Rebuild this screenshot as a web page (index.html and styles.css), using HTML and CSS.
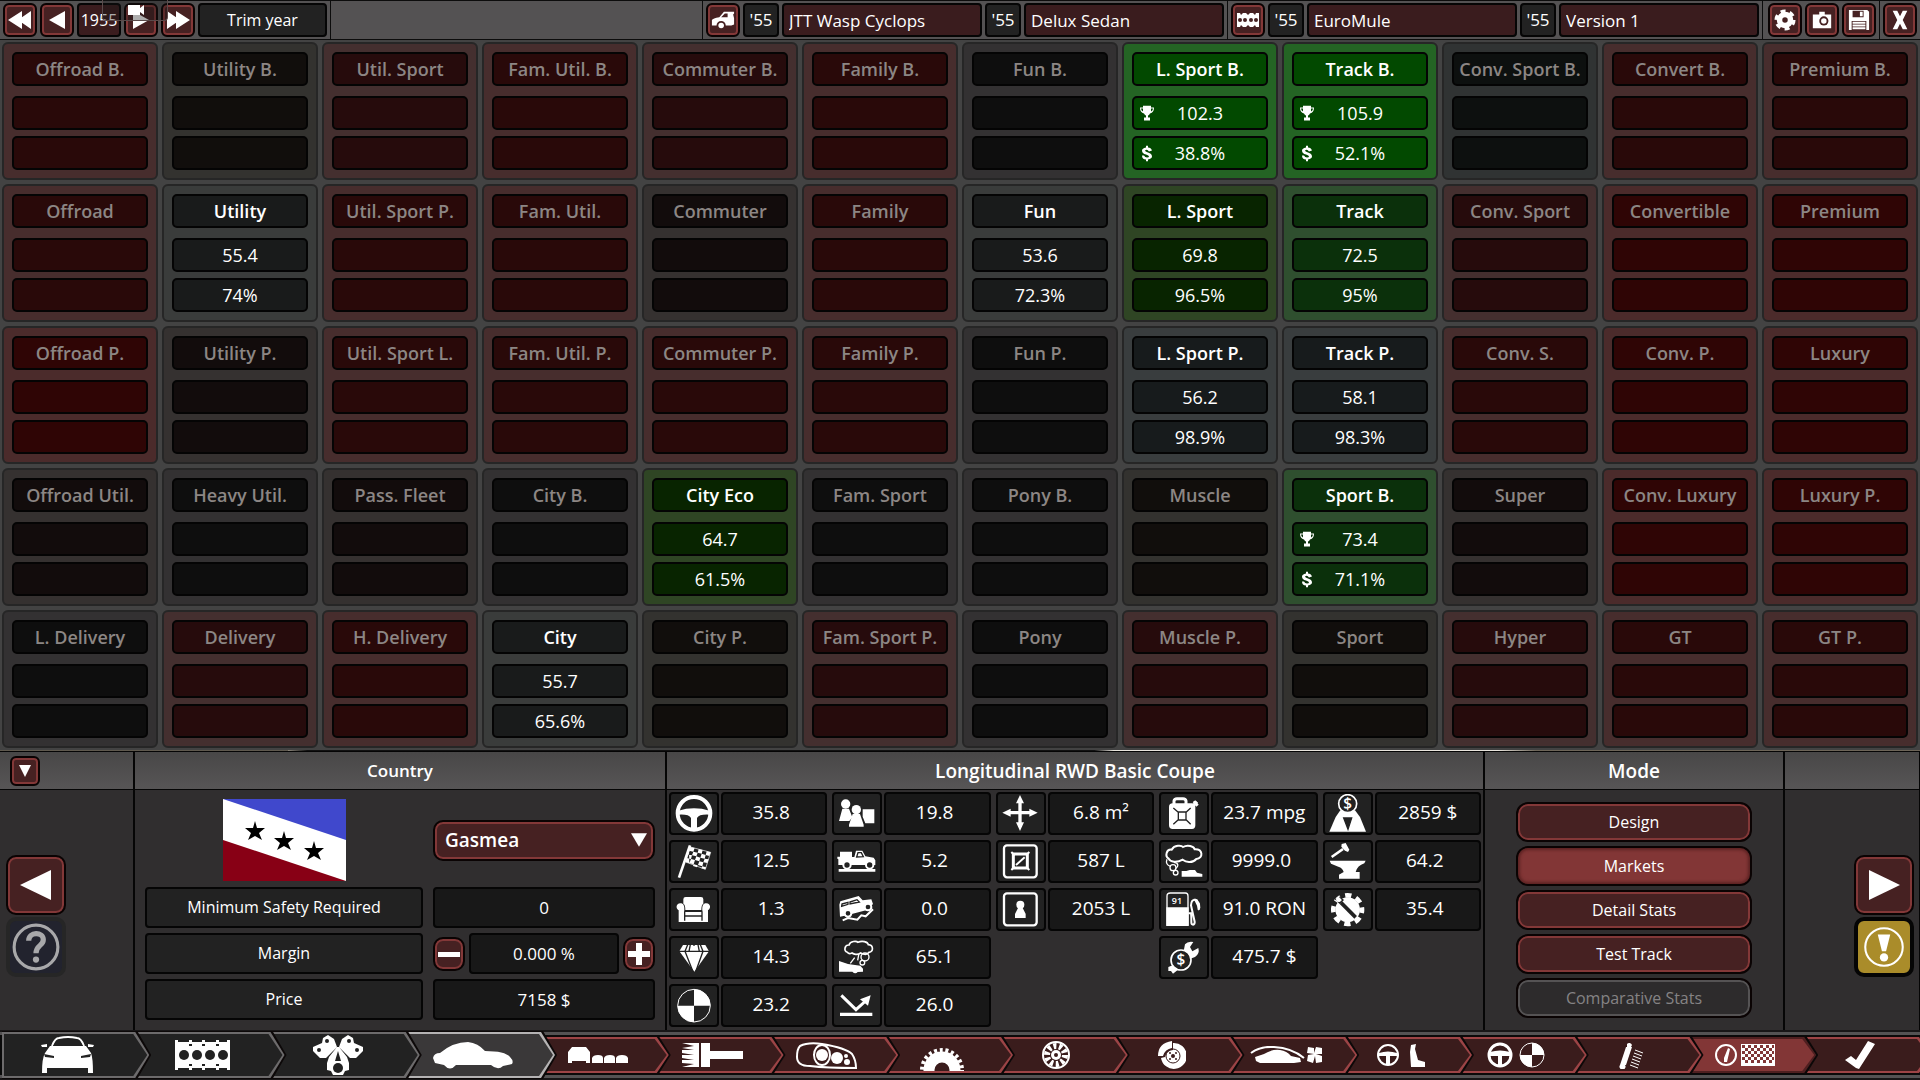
FILE: index.html
```html
<!DOCTYPE html>
<html lang="en">
<head>
  <meta charset="UTF-8">
  <meta name="viewport" content="width=device-width, initial-scale=1.0">
  <title>Markets - JTT Wasp Cyclops</title>
  <link rel="stylesheet" href="styles.css">
</head>
<body>
  <!-- Top bar -->
  <header class="topbar">
    <div class="group">
      <button class="btn square" aria-label="Back ten years"><svg viewBox="0 0 24 20"><path d="M0 10L14 1V19ZM10 10L23 1V19Z"/></svg></button>
      <button class="btn square" aria-label="Previous year"><svg viewBox="0 0 24 20"><path d="M4 10L20 1V19Z"/></svg></button>
      <span class="year">1955</span>
      <button class="btn square" aria-label="Next year"><svg viewBox="0 0 24 20"><path d="M20 10L4 1V19Z"/></svg></button>
      <button class="btn square" aria-label="Forward ten years"><svg viewBox="0 0 24 20"><path d="M24 10L10 1V19ZM14 10L1 1V19Z"/></svg></button>
      <span class="tag wide">Trim year</span>
    </div>
    <div class="camera-tab"><svg viewBox="0 0 16 12"><path d="M0 1H12V4L16 1V11L12 8V11H0Z"/></svg></div>
    <div class="spacer"></div>
    <div class="group">
      <button class="btn square" aria-label="Car model"><svg viewBox="0 0 26 20"><path d="M1 16V10Q2 8 9 7L14 1H25V3L24 4L25 8V15L22 16H16A5 5 0 0 0 6 16ZM11 7H18V3H15Z" fill-rule="evenodd"/><circle cx="11" cy="16" r="3"/></svg></button>
      <span class="tag">'55</span>
      <input class="name" aria-label="Model name" value="JTT Wasp Cyclops">
      <span class="tag">'55</span>
      <input class="name" aria-label="Trim name" value="Delux Sedan">
    </div>
    <div class="group">
      <button class="btn square" aria-label="Engine"><svg viewBox="0 0 24 16"><path d="M1 1H4L5 3L7 1H10L12 3L14 1H17L19 3L20 1H23V15H20L19 13L17 15H14L12 13L10 15H7L5 13L4 15H1Z"/><g class="hole"><circle cx="4" cy="8" r="2"/><circle cx="9" cy="8" r="2"/><circle cx="15" cy="8" r="2"/><circle cx="20" cy="8" r="2"/></g></svg></button>
      <span class="tag">'55</span>
      <input class="name long" aria-label="Engine name" value="EuroMule">
      <span class="tag">'55</span>
      <input class="name" aria-label="Engine version" value="Version 1">
    </div>
    <div class="group tools">
      <button class="btn square" aria-label="Settings"><svg viewBox="0 0 24 24"><circle cx="12" cy="12" r="6" fill="none" stroke="#fff" stroke-width="6"/><circle cx="12" cy="12" r="9" fill="none" stroke="#fff" stroke-width="5" stroke-dasharray="5 4.42"/></svg></button>
      <button class="btn square" aria-label="Screenshot"><svg viewBox="0 0 24 24"><path d="M2 6H9V3H15V6H22V21H2Z"/><circle class="hole" cx="14" cy="13" r="5"/><circle cx="14" cy="13" r="3"/></svg></button>
      <button class="btn square" aria-label="Save"><svg viewBox="0 0 24 24"><path d="M1 1H21L23 3V23H1Z"/><path class="hole" d="M5 2H17V9H5ZM4 13H20V23H4Z"/><path d="M13 3H16V8H13ZM5 14H19V16H5ZM5 17H19V19H5ZM5 20H19V22H5Z"/></svg></button>
    </div>
    <div class="group">
      <button class="btn square" aria-label="Close"><svg viewBox="0 0 24 24"><path d="M4 2H9L12 8L15 2H20L15 12L20 22H15L12 16L9 22H4L9 12Z"/></svg></button>
    </div>
  </header>

  <!-- Market demographics -->
  <main class="board">
    <article class="cell red"><h3>Offroad B.</h3><p></p><p></p></article>
    <article class="cell olive"><h3>Utility B.</h3><p></p><p></p></article>
    <article class="cell soft"><h3>Util. Sport</h3><p></p><p></p></article>
    <article class="cell red"><h3>Fam. Util. B.</h3><p></p><p></p></article>
    <article class="cell soft"><h3>Commuter B.</h3><p></p><p></p></article>
    <article class="cell red"><h3>Family B.</h3><p></p><p></p></article>
    <article class="cell dark"><h3>Fun B.</h3><p></p><p></p></article>
    <article class="cell best lit"><h3>L. Sport B.</h3><p class="rank"><svg viewBox="0 0 14 16"><use href="#cup"/></svg>102.3</p><p class="rank"><svg viewBox="0 0 14 16"><use href="#cash"/></svg>38.8%</p></article>
    <article class="cell best lit"><h3>Track B.</h3><p class="rank"><svg viewBox="0 0 14 16"><use href="#cup"/></svg>105.9</p><p class="rank"><svg viewBox="0 0 14 16"><use href="#cash"/></svg>52.1%</p></article>
    <article class="cell slate"><h3>Conv. Sport B.</h3><p></p><p></p></article>
    <article class="cell red"><h3>Convert B.</h3><p></p><p></p></article>
    <article class="cell red"><h3>Premium B.</h3><p></p><p></p></article>

    <article class="cell red"><h3>Offroad</h3><p></p><p></p></article>
    <article class="cell grey lit"><h3>Utility</h3><p>55.4</p><p>74%</p></article>
    <article class="cell red"><h3>Util. Sport P.</h3><p></p><p></p></article>
    <article class="cell red"><h3>Fam. Util.</h3><p></p><p></p></article>
    <article class="cell warm"><h3>Commuter</h3><p></p><p></p></article>
    <article class="cell red"><h3>Family</h3><p></p><p></p></article>
    <article class="cell grey lit"><h3>Fun</h3><p>53.6</p><p>72.3%</p></article>
    <article class="cell moss lit"><h3>L. Sport</h3><p>69.8</p><p>96.5%</p></article>
    <article class="cell green lit"><h3>Track</h3><p>72.5</p><p>95%</p></article>
    <article class="cell soft"><h3>Conv. Sport</h3><p></p><p></p></article>
    <article class="cell deep"><h3>Convertible</h3><p></p><p></p></article>
    <article class="cell deep"><h3>Premium</h3><p></p><p></p></article>

    <article class="cell deep"><h3>Offroad P.</h3><p></p><p></p></article>
    <article class="cell warm"><h3>Utility P.</h3><p></p><p></p></article>
    <article class="cell red"><h3>Util. Sport L.</h3><p></p><p></p></article>
    <article class="cell red"><h3>Fam. Util. P.</h3><p></p><p></p></article>
    <article class="cell red"><h3>Commuter P.</h3><p></p><p></p></article>
    <article class="cell red"><h3>Family P.</h3><p></p><p></p></article>
    <article class="cell dark"><h3>Fun P.</h3><p></p><p></p></article>
    <article class="cell steel lit"><h3>L. Sport P.</h3><p>56.2</p><p>98.9%</p></article>
    <article class="cell steel lit"><h3>Track P.</h3><p>58.1</p><p>98.3%</p></article>
    <article class="cell red"><h3>Conv. S.</h3><p></p><p></p></article>
    <article class="cell deep"><h3>Conv. P.</h3><p></p><p></p></article>
    <article class="cell deep"><h3>Luxury</h3><p></p><p></p></article>

    <article class="cell warm"><h3>Offroad Util.</h3><p></p><p></p></article>
    <article class="cell dark"><h3>Heavy Util.</h3><p></p><p></p></article>
    <article class="cell warm"><h3>Pass. Fleet</h3><p></p><p></p></article>
    <article class="cell dark"><h3>City B.</h3><p></p><p></p></article>
    <article class="cell moss lit"><h3>City Eco</h3><p>64.7</p><p>61.5%</p></article>
    <article class="cell dark"><h3>Fam. Sport</h3><p></p><p></p></article>
    <article class="cell dark"><h3>Pony B.</h3><p></p><p></p></article>
    <article class="cell olive"><h3>Muscle</h3><p></p><p></p></article>
    <article class="cell green lit"><h3>Sport B.</h3><p class="rank"><svg viewBox="0 0 14 16"><use href="#cup"/></svg>73.4</p><p class="rank"><svg viewBox="0 0 14 16"><use href="#cash"/></svg>71.1%</p></article>
    <article class="cell warm"><h3>Super</h3><p></p><p></p></article>
    <article class="cell deep"><h3>Conv. Luxury</h3><p></p><p></p></article>
    <article class="cell deep"><h3>Luxury P.</h3><p></p><p></p></article>

    <article class="cell dark"><h3>L. Delivery</h3><p></p><p></p></article>
    <article class="cell soft"><h3>Delivery</h3><p></p><p></p></article>
    <article class="cell red"><h3>H. Delivery</h3><p></p><p></p></article>
    <article class="cell grey lit"><h3>City</h3><p>55.7</p><p>65.6%</p></article>
    <article class="cell olive"><h3>City P.</h3><p></p><p></p></article>
    <article class="cell soft"><h3>Fam. Sport P.</h3><p></p><p></p></article>
    <article class="cell dark"><h3>Pony</h3><p></p><p></p></article>
    <article class="cell soft"><h3>Muscle P.</h3><p></p><p></p></article>
    <article class="cell olive"><h3>Sport</h3><p></p><p></p></article>
    <article class="cell soft"><h3>Hyper</h3><p></p><p></p></article>
    <article class="cell red"><h3>GT</h3><p></p><p></p></article>
    <article class="cell red"><h3>GT P.</h3><p></p><p></p></article>
  </main>
  <div class="scene-edge"></div>

  <!-- Bottom panel -->
  <section class="panel">
    <div class="col">
      <div class="col-head left"><button class="btn fold" aria-label="Collapse panel"><svg viewBox="0 0 12 12"><path d="M0 0H12L6 12Z"/></svg></button></div>
      <div class="side">
        <button class="btn nav" aria-label="Previous"><svg viewBox="0 0 32 32"><path d="M0 16L31 1V31Z"/></svg></button>
        <button class="btn help" aria-label="Help"><svg viewBox="0 0 48 48"><circle cx="24" cy="24" r="21"/><path d="M17 18C17 9 31 9 31 17C31 23 24 22 24 30"/><circle class="dot" cx="24" cy="36" r="3"/></svg></button>
      </div>
    </div>

    <div class="col">
      <h2 class="col-head small-title">Country</h2>
      <div class="country">
        <svg class="flag" viewBox="0 0 123 82"><path fill="#fff" d="M0 0H123V82H0Z"/><path fill="#4048cc" d="M0 0H123V41Z"/><path fill="#880015" d="M0 41L123 82H0Z"/>
          <g fill="#000"><path id="star" d="M32 22L34 29H42L36 34L39 41L32 37L25 41L28 34L22 29H30Z"/><use href="#star" x="29" y="10"/><use href="#star" x="59" y="20"/></g></svg>
        <div class="picker">
          <select aria-label="Country"><option>Gasmea</option></select>
          <svg viewBox="0 0 14 12"><path d="M0 0H14L7 12Z"/></svg>
        </div>
        <span class="key">Minimum Safety Required</span>
        <span class="val">0</span>
        <label class="key" for="margin">Margin</label>
        <div class="stepper">
          <button class="btn step" aria-label="Decrease margin"><svg viewBox="0 0 24 24"><path d="M1 10H23V15H1Z"/></svg></button>
          <input class="val" id="margin" value="0.000 %">
          <button class="btn step" aria-label="Increase margin"><svg viewBox="0 0 24 24"><path d="M1 9H9V1H15V9H23V15H15V23H9V15H1Z"/></svg></button>
        </div>
        <span class="key">Price</span>
        <span class="val">7158 $</span>
      </div>
    </div>

    <div class="col">
      <h2 class="col-head">Longitudinal RWD Basic Coupe</h2>
      <div class="stats">
        <div class="stat"><svg viewBox="6 6 138 117" class="icon"><circle cx="75" cy="64" r="49" class="ln" stroke-width="12"/><path d="M28 56Q75 42 122 56V68Q90 66 84 78V111H66V78Q60 66 28 68Z"/></svg><span class="val plain">35.8</span></div>
        <div class="stat"><svg viewBox="6 6 138 117" class="icon"><path class="ln" stroke-width="8" d="M63 16L30 113"/><path class="ln" stroke-width="2" d="M64 21L125 37L109 88L50 66Z"/><path d="M64 21L77 24L73 35L60 32ZM89 27L101 30L98 41L86 38ZM113 34L125 37L121 48L110 45ZM73 35L86 38L82 49L69 46ZM98 41L110 45L107 56L94 53ZM60 32L57 43L69 46L66 57L53 54L49 66L61 70L66 57L78 60L82 49L94 53L91 64L103 67L107 56L119 58L115 69L103 67L100 79L111 82L109 88L97 85L100 79L87 75L91 64L78 60L74 73L86 76L84 82L72 78L74 73L61 70Z"/></svg><span class="val plain">12.5</span></div>
        <div class="stat"><svg viewBox="6 6 138 117" class="icon"><path d="M43 34Q43 27 50 27H96Q103 27 103 34V47Q97 50 97 66H49Q49 50 43 47ZM34 46C44 46 47 54 46 69H100C99 54 102 46 112 46C126 47 126 62 117 67V102H29V67C20 62 20 47 34 46Z"/><path class="cut" d="M46 70H100M46 84H100M47 70V98M99 70V98"/></svg><span class="val plain">1.3</span></div>
        <div class="stat"><svg viewBox="6 6 138 117" class="icon"><path d="M42 27H109L120 46L76 107L31 46Z"/><path class="cut" d="M28 46H122M56 26L48 46L72 107M94 26L102 46L80 107M75 26V30M64 26L60 46M87 26L91 46"/></svg><span class="val plain">14.3</span></div>
        <div class="stat"><svg viewBox="6 6 138 117" class="icon"><circle cx="75" cy="65" r="49" class="ln" stroke-width="3"/><path d="M75 65V16A49 49 0 0 1 124 65ZM75 65V114A49 49 0 0 1 26 65Z"/></svg><span class="val plain">23.2</span></div>

        <div class="stat"><svg viewBox="6 6 138 117" class="icon"><circle cx="41" cy="36" r="14"/><path d="M31 50H51L61 76L52 87H21ZM92 52H127V94H100L92 74Z"/><circle cx="73" cy="53" r="14"/><path d="M62 66H84L95 98V104H51V98Z"/></svg><span class="val plain">19.8</span></div>
        <div class="stat"><svg viewBox="6 6 138 117" class="icon"><path d="M24 35H60V51H67L72 32H91L100 49L125 53L130 61V75H19V58L16 56V50H24Z"/><path class="cut" d="M74 51L78 38H88L94 50Z"/><g class="tyre"><circle cx="45" cy="75" r="11"/><circle cx="113" cy="75" r="11"/></g><path d="M20 87H130V95H20Z"/></svg><span class="val plain">5.2</span></div>
        <div class="stat"><svg viewBox="6 6 138 117" class="icon"><path d="M22 50L25 40L80 24L92 37L118 34L123 48L105 66L45 82L24 86Z"/><path class="cut" d="M30 48L48 43V49L29 55ZM54 42L75 35L82 42L54 48Z"/><g class="tyre"><circle cx="48" cy="76" r="10"/><circle cx="108" cy="57" r="10"/></g><path class="ln" stroke-width="6" d="M32 97L48 90L76 95L88 82L101 85L123 64"/></svg><span class="val plain">0.0</span></div>
        <div class="stat"><svg viewBox="6 6 138 117" class="icon"><path class="ln" stroke-width="5" d="M46 49C34 45 38 26 51 27C55 14 74 15 78 19C90 13 107 17 109 26C125 27 125 47 111 49C105 58 92 54 86 51C77 58 65 55 60 51C54 54 49 53 46 49Z"/><g class="ln" stroke-width="4"><circle cx="99" cy="63" r="12"/><circle cx="91" cy="80" r="7"/><path d="M68 65L55 82M80 57L77 73"/></g><path d="M21 75L48 84L85 89L93 98V107L77 108Q70 116 61 107H21Z"/></svg><span class="val plain">65.1</span></div>
        <div class="stat"><svg viewBox="6 6 138 117" class="icon"><path class="ln" stroke-width="9" d="M28 34L72 77L104 48"/><path d="M116 34L108 65L84 46ZM24 86H121V96H24Z"/></svg><span class="val plain">26.0</span></div>

        <div class="stat"><svg viewBox="6 6 138 117" class="icon"><path d="M72 9L84 34H77V57H100V50L125 62L100 74V67H77V91H84L72 117L60 91H67V67H44V74L19 62L44 50V57H67V34H60Z"/></svg><span class="val">6.8 m²</span></div>
        <div class="stat"><svg viewBox="6 6 138 117" class="icon"><rect class="ln" stroke-width="7" x="24" y="16" width="98" height="96" rx="9"/><path class="ln" stroke-width="9" d="M52 42H94V84H52Z"/><path class="ln" stroke-width="6" d="M46 36L56 46M100 36L90 46M46 90L56 80M100 90L90 80M60 75L86 52"/></svg><span class="val">587 L</span></div>
        <div class="stat"><svg viewBox="6 6 138 117" class="icon"><rect class="ln" stroke-width="7" x="24" y="16" width="98" height="96" rx="9"/><circle cx="73" cy="50" r="12"/><path d="M66 60H80L89 78V90H57V78Z"/></svg><span class="val">2053 L</span></div>
        <div class="gap"></div>
        <div class="gap"></div>

        <div class="stat"><svg viewBox="6 6 138 117" class="icon"><path class="ln" stroke-width="9" d="M45 37V27Q46 20 54 20H72Q80 20 81 27V37M96 48L114 29"/><path d="M30 45Q30 34 41 34H99Q109 34 109 45V100Q109 111 99 111H41Q30 111 30 100ZM101 30L109 25L119 38L112 44Z"/><path class="cut" d="M43 48L57 60M95 48L82 60M43 97L57 84M95 97L82 84M58 60H81V84H58Z" fill="none"/></svg><span class="val">23.7 mpg</span></div>
        <div class="stat"><svg viewBox="6 6 138 117" class="icon"><path class="ln" stroke-width="6" d="M29 56C17 48 22 27 38 29C46 14 68 16 72 21C85 13 105 18 107 28C132 27 134 54 112 57C99 72 80 66 71 59C53 69 34 66 29 56Z"/><g class="ln" stroke-width="4"><path d="M24 58C20 68 24 76 35 79M45 67C61 69 58 81 50 85"/><circle cx="42" cy="83" r="9"/><circle cx="50" cy="98" r="7"/></g><path d="M68 93H82L92 90H108L114 98L130 102V110H68Z"/></svg><span class="val plain">9999.0</span></div>
        <div class="stat"><svg viewBox="6 6 138 117" class="icon"><path class="ln" stroke-width="4" d="M24 113V24Q24 15 34 15H79Q87 15 87 24V113"/><path d="M22 58H89V114H22Z"/><path class="ln" stroke-width="6" d="M88 76H96Q97 80 97 103Q97 110 102 110Q108 109 107 101L96 52Q97 34 109 35L119 46V66"/><path d="M104 32L115 34L123 48L124 60L118 68L114 53Z"/><text x="54" y="49">91</text></svg><span class="val">91.0 RON</span></div>
        <div class="stat"><svg viewBox="6 6 138 117" class="icon"><path d="M74 45L78 25Q86 15 103 18L93 33L100 46L118 36Q123 53 108 63L94 68ZM28 93L43 87L56 102L42 113L36 105H28Z"/><circle class="disc" cx="66" cy="72" r="30"/><text class="coin" x="66" y="88">$</text></svg><span class="val">475.7 $</span></div>
        <div class="gap"></div>

        <div class="stat"><svg viewBox="6 6 138 117" class="icon"><path d="M52 55H96L111 75L129 119H19L38 75Z"/><path class="cut solid" d="M62 78H86L75 112Z"/><circle class="disc" cx="74" cy="35" r="27"/><text class="coin" x="74" y="51">$</text></svg><span class="val">2859 $</span></div>
        <div class="stat"><svg viewBox="6 6 138 117" class="icon"><path class="ln" stroke-width="8" d="M26 51L60 27"/><path d="M56 12L68 9L79 29L75 36L66 32L55 20ZM20 62H128L124 70Q103 77 98 96H110V116H48V104L62 96Q59 84 46 80L24 71Z"/></svg><span class="val plain">64.2</span></div>
        <div class="stat"><svg viewBox="6 6 138 117" class="icon"><circle cx="74" cy="65" r="37"/><circle cx="74" cy="65" r="43" class="ln" stroke-width="14" stroke-dasharray="19 14.77" stroke-dashoffset="9"/><path class="cut bar" d="M54 44L98 88"/><path class="cut" d="M37 32L50 45L60 36L49 27"/><circle cx="46" cy="35" r="7"/></svg><span class="val plain">35.4</span></div>
      </div>
    </div>

    <div class="col">
      <h2 class="col-head">Mode</h2>
      <div class="modes">
        <button class="btn mode">Design</button>
        <button class="btn mode active">Markets</button>
        <button class="btn mode">Detail Stats</button>
        <button class="btn mode">Test Track</button>
        <button class="btn mode" disabled>Comparative Stats</button>
      </div>
    </div>

    <div class="col last">
      <div class="col-head"></div>
      <div class="side right">
        <button class="btn nav" aria-label="Next"><svg viewBox="0 0 32 32"><path d="M32 16L1 1V31Z"/></svg></button>
        <button class="btn alert" aria-label="Warnings"><svg viewBox="0 0 48 48"><circle cx="24" cy="24" r="18"/><path d="M18 12H30L26 28H22Z"/><path d="M24 30A4 4 0 1 1 24 38A4 4 0 1 1 24 30Z"/></svg></button>
      </div>
    </div>
  </section>

  <!-- Design steps -->
  <nav class="track">
    <div class="stages">
      <button class="stage" aria-label="Car body"><svg width="53" height="38" viewBox="0 0 53 38"><path class="ln" stroke-width="2" d="M11 10Q14 2 18 2Q27 0 36 2Q40 2 43 10"/><path d="M9 10H45L50 17Q52 22 52 37H47V32H6V37H1Q1 22 4 17ZM0 9L6 8V11H1ZM53 9L47 8V11H52Z"/><path fill="#222" d="M12 10L16 4Q27 2 38 4L42 10ZM3 18L13 20V22L4 21ZM50 18L40 20V22L49 21Z"/></svg></button>
      <button class="stage" aria-label="Engine block"><svg width="55" height="30" viewBox="0 0 55 30"><path d="M0 0H3V2H14V0H17V2H27V0H30V2H41V0H44V2H52V0H55V30H52V28H44V30H41V28H30V30H27V28H17V30H14V28H3V30H0Z"/><g fill="#222"><circle cx="9" cy="15" r="5"/><circle cx="22" cy="15" r="5"/><circle cx="35" cy="15" r="5"/><circle cx="48" cy="15" r="5"/><path d="M14 4H17V6H14ZM27 4H30V6H27ZM41 4H44V6H41ZM14 24H17V26H14ZM27 24H30V26H27ZM41 24H44V26H41Z"/></g></svg></button>
      <button class="stage" aria-label="Engine internals"><svg width="50" height="40" viewBox="0 0 50 40"><path d="M15 0L21 4L24 12L13 23H7L0 16V12L9 8L10 3ZM35 0L29 4L26 12L37 23H43L50 16V12L41 8L40 3ZM24 12H26L34 22L36 28V35L32 36L30 40H20L18 36L14 35V28L16 22Z"/><g fill="#222"><circle cx="14" cy="6" r="2"/><circle cx="36" cy="6" r="2"/><circle cx="6" cy="15" r="2"/><circle cx="44" cy="15" r="2"/><path d="M25 16L28 26H22Z"/><circle cx="25" cy="33" r="5"/></g></svg></button>
      <button class="stage current" aria-label="Trim"><svg width="80" height="27" viewBox="0 0 80 27"><path d="M0 16Q1 11 7 11Q20 0 35 0Q45 1 52 9Q72 9 77 15Q81 19 79 22L70 24Q65 29 58 23H23Q17 30 11 23L2 21Z"/></svg></button>
    </div>
    <div class="steps">
      <button class="stage small" aria-label="Body type"><svg width="60" height="17" viewBox="0 0 60 17"><path d="M0 5L4 0H18L22 5V16H18V14H4V16H0ZM24 16V11Q25 8 30 8Q35 8 35 11V16ZM36 16V11Q37 8 42 8Q47 8 47 11V16ZM48 16V11Q49 8 54 8Q59 8 60 11V16Z"/></svg></button>
      <button class="stage small" aria-label="Paint"><svg width="61" height="24" viewBox="0 0 61 24"><path d="M0 0H17V24H0L12 21L0 20V17L12 17L0 15V12L12 12L0 10V7L12 7L0 5L12 3ZM19 0H28V8H61V16H28V24H19Z"/></svg></button>
      <button class="stage small" aria-label="Fixtures"><svg width="62" height="27" viewBox="0 0 62 27"><path class="ln" stroke-width="2" d="M4 4Q12 0 26 2Q50 6 56 12Q60 18 60 26Q30 26 14 24Q1 24 1 15Q1 7 4 4Z"/><ellipse class="ln" stroke-width="2" cx="26" cy="13" rx="8" ry="10"/><circle cx="26" cy="13" r="6"/><circle cx="41" cy="16" r="6"/><circle cx="50" cy="14" r="2"/><circle cx="51" cy="20" r="3"/></svg></button>
      <button class="stage small low" aria-label="Gearbox"><svg width="44" height="23" viewBox="0 0 44 23"><circle cx="22" cy="22" r="13" class="ln" stroke-width="11"/><circle cx="22" cy="22" r="20" class="ln" stroke-width="4" stroke-dasharray="3 2.71"/></svg></button>
      <button class="stage small" aria-label="Wheels"><svg width="29" height="29" viewBox="0 0 29 29"><circle cx="14" cy="14" r="13" class="ln" stroke-width="2"/><circle cx="14" cy="14" r="9" class="ln" stroke-width="6" stroke-dasharray="3 2.65"/><circle cx="14" cy="14" r="5"/><circle cx="14" cy="14" r="2" fill="#3a1c1c"/></svg></button>
      <button class="stage small" aria-label="Brakes"><svg width="28" height="28" viewBox="0 0 28 28"><path d="M0 15Q0 2 14 0V7Q7 8 5 15Z"/><path d="M15 2A13 13 0 1 1 3 17L7 16Q8 10 15 9Z"/><circle cx="15" cy="15" r="7" fill="none" stroke="#3a1c1c"/><g fill="#3a1c1c"><circle cx="15" cy="15" r="2"/><circle cx="12" cy="12" r="1"/><circle cx="18" cy="12" r="1"/><circle cx="12" cy="18" r="1"/><circle cx="18" cy="18" r="1"/></g></svg></button>
      <button class="stage small" aria-label="Aerodynamics"><svg width="73" height="18" viewBox="0 0 73 18"><path class="ln" stroke-width="2" d="M1 7Q10 0 24 1Q42 2 54 12"/><path d="M5 11L14 8Q22 3 30 4Q37 5 41 10L50 12L51 16L44 17H10L6 15ZM64 8L57 7L58 1L64 2V7L66 1L72 2V8L66 8L72 10V16L66 17L65 10L63 17L57 15L58 9Z"/></svg></button>
      <button class="stage small" aria-label="Interior"><svg width="49" height="23" viewBox="0 0 49 23"><circle cx="11" cy="11" r="10" class="ln" stroke-width="2"/><path d="M2 9Q11 6 20 9V12H13V20H9V12H2ZM34 1L39 0L38 5L41 16L48 18V23H34L33 8Z"/></svg></button>
      <button class="stage small" aria-label="Driving aids"><svg width="58" height="26" viewBox="0 0 58 26"><circle cx="13" cy="13" r="11" class="ln" stroke-width="3"/><path d="M3 10Q13 7 23 10V14H15V23H11V14H3Z"/><circle cx="45" cy="13" r="12" class="ln" stroke-width="1"/><path d="M45 13V1A12 12 0 0 1 57 13ZM45 13V25A12 12 0 0 1 33 13Z"/></svg></button>
      <button class="stage small" aria-label="Suspension"><svg width="26" height="27" viewBox="0 0 26 27"><path d="M8 5H14L8 23H2ZM9 2A3 3 0 0 1 14 3L13 5H9ZM2 23H7A3 3 0 1 1 2 23Z"/><path class="ln" stroke-width="1" d="M17 8L25 11M16 11L24 14M15 14L23 17M14 17L22 20M13 20L21 23M12 23L20 26"/></svg></button>
      <button class="stage small picked" aria-label="Testing"><svg width="60" height="24" viewBox="0 0 60 24"><circle cx="11" cy="12" r="10" class="ln" stroke-width="2"/><path d="M13 5L15 6L12 19H9V15Z"/><rect x="26" y="1" width="34" height="22"/><path stroke="#823636" stroke-width="3" stroke-dasharray="3 3" d="M27 3.5H59M27 9.5H59M27 15.5H59M30 6.5H59M30 12.5H59M30 18.5H59"/></svg></button>
      <button class="stage small end" aria-label="Finish"><svg width="30" height="28" viewBox="0 0 30 28"><path d="M0 19L6 15L11 19L23 0L30 3L14 28L11 27Z"/></svg></button>
    </div>
  </nav>

  <svg class="defs" aria-hidden="true">
    <symbol id="cup" viewBox="0 0 14 16"><path d="M3 0H11V2H14Q14 7 10 8Q9 10 8 10V12H10V15H4V12H6V10Q5 10 4 8Q0 7 0 2H3ZM1 3Q1 5 3 6V3ZM13 3H11V6Q13 5 13 3Z" fill-rule="evenodd"/></symbol>
    <symbol id="cash" viewBox="0 0 14 16"><path d="M6 0H8V2Q11 2 12 5L9 6Q7 3 5 5Q5 6 8 7Q12 8 12 11Q12 13 8 14V16H6V14Q2 14 2 10L4 10Q5 12 7 12Q9 12 9 11Q9 10 6 9Q2 8 2 5Q2 3 6 2Z"/></symbol>
  </svg>
</body>
</html>
```
FILE: styles.css
```css
* {
  box-sizing: border-box;
}

body {
  margin: 0;
  min-height: 100vh;
  display: flex;
  flex-direction: column;
  background: #434343;
  color: #fff;
  font-family: "Open Sans", "Noto Sans", sans-serif;
  font-size: 16px;
}

button, input, select {
  font: inherit;
  color: inherit;
  margin: 0;
}

h2, h3, p {
  margin: 0;
}

svg {
  display: block;
  fill: #fff;
}

.defs {
  display: none;
}

.ln {
  fill: none;
  stroke: #fff;
}

.hole {
  fill: #462122;
}

/* buttons */
.btn {
  display: flex;
  align-items: center;
  justify-content: center;
  padding: 0;
  background: #462122;
  border: 2px solid #0a0303;
  box-shadow: inset 0 0 0 2px #833838;
  border-radius: 6px;
  cursor: pointer;
}

.btn:hover {
  background: #5a2829;
}

/* top bar */
.topbar {
  position: relative;
  display: flex;
  height: 40px;
  background: #545253;
  border-top: 1px solid #0c0c0c;
  border-bottom: 1px solid #0c0c0c;
}

.group {
  display: flex;
  align-items: center;
  gap: 3px;
  padding: 0 3px;
  border-right: 1px solid #0c0c0c;
}

.group:last-child {
  border-right: 0;
}

.tools {
  padding: 0 3px 0 5px;
}

.spacer {
  flex: 1;
  border-right: 1px solid #0c0c0c;
}

.square {
  width: 34px;
  height: 34px;
}

.square svg {
  width: 24px;
  height: 22px;
}

.year, .tag, .name {
  height: 34px;
  line-height: 30px;
  border: 2px solid #050505;
  border-radius: 4px;
  background: #222;
  text-align: center;
}

.year {
  width: 44px;
  background: #3a1c1e;
}

.tag {
  width: 36px;
  font-size: 17px;
}

.tag.wide {
  width: 129px;
  font-size: 16px;
}

.name {
  width: 200px;
  padding: 0 5px;
  background: #3a1c1e;
  font-size: 17px;
  text-align: left;
}

.name.long {
  width: 210px;
}

.camera-tab {
  position: absolute;
  top: -1px;
  left: 102px;
  width: 66px;
  height: 21px;
  padding: 4px 0 0 25px;
  background: rgba(20, 20, 20, 0.35);
  border: 1px solid #5a4a4a;
  border-top: 0;
  border-radius: 0 0 4px 4px;
}

.camera-tab svg {
  width: 16px;
  height: 12px;
}

/* market grid */
.board {
  display: grid;
  grid-template-columns: repeat(12, 1fr);
  gap: 4px;
  padding: 2px;
}

.cell {
  --box: #0e0e0e;
  display: flex;
  flex-direction: column;
  gap: 6px;
  padding: 8px;
  border: 2px solid #262626;
  border-radius: 6px;
  color: #8c8684;
}

.cell h3, .cell p {
  height: 34px;
  border: 2px solid #040404;
  border-radius: 5px;
  background: var(--box);
  font-size: 18px;
  line-height: 31px;
  text-align: center;
  white-space: nowrap;
}

.cell h3 {
  margin-bottom: 4px;
  font-weight: 600;
}

.cell .rank {
  display: grid;
  grid-template-columns: 14px 1fr 14px;
  padding: 0 6px;
}

.rank svg {
  width: 14px;
  height: 17px;
  align-self: center;
}

.lit { color: #fff; }
.red { background: #472d2d; --box: #290909; }
.soft { background: #442f2f; --box: #260b0c; }
.deep { background: #4b2b2b; --box: #2f0505; }
.dark { background: #333132; --box: #0e0e0e; }
.warm { background: #353130; --box: #120c0c; }
.olive { background: #33322f; --box: #110e0c; }
.slate { background: #303333; --box: #0d100f; }
.grey { background: #3a3c3b; --box: #191b1b; }
.steel { background: #393d3e; --box: #171b1c; }
.best { background: #246424; --box: #024900; }
.moss { background: #2f4524; --box: #082400; }
.green { background: #2f4f2f; --box: #0b300b; }

/* sliver of the showroom above the panel */
.scene-edge {
  height: 1px;
  background: linear-gradient(90deg, #5f594e 15%, #8b857a 15%, #111 16%, #111 57%, #e8e4dc 58%, #e8e4dc 78%, #6d6558 80%);
}

/* bottom panel */
.panel {
  flex: 1;
  display: grid;
  grid-template-columns: 133fr 532fr 818fr 300fr 137fr;
  background: #302e2f;
  border-top: 1px solid #050505;
}

.col {
  min-width: 0;
  border-left: 2px solid #050505;
}

.col:first-child {
  border-left: 0;
}

.col.last {
  border-right: 1px solid #050505;
}

.col-head {
  height: 38px;
  display: flex;
  align-items: center;
  justify-content: center;
  background: linear-gradient(#484747, #575556);
  border-bottom: 1px solid #050505;
  font-size: 19px;
  font-weight: 600;
}

.col-head.left {
  justify-content: flex-start;
  padding-left: 10px;
}

.col-head.small-title {
  font-size: 17px;
}

.fold {
  width: 30px;
  height: 30px;
}

.fold svg {
  width: 12px;
  height: 12px;
}

.side {
  display: flex;
  flex-direction: column;
  align-items: flex-start;
  gap: 2px;
  padding: 65px 5px 0 6px;
}

.side.right {
  align-items: flex-end;
}

.nav, .help, .alert {
  width: 60px;
  height: 60px;
  border-radius: 10px;
}

.nav svg {
  width: 32px;
  height: 32px;
}

.help {
  background: #22232e;
  border: 4px solid #262626;
  box-shadow: none;
}

.help svg {
  width: 50px;
  height: 50px;
  fill: none;
  stroke: #a8a8aa;
  stroke-width: 3;
}

.help path {
  stroke-width: 5;
}

.help .dot {
  fill: #a8a8aa;
  stroke: none;
}

.alert {
  background: #aa8c2a;
  border: 4px solid #050505;
  box-shadow: none;
}

.alert svg {
  width: 50px;
  height: 50px;
}

.alert circle {
  fill: none;
  stroke: #fff;
  stroke-width: 2;
}

/* country */
.country {
  display: grid;
  grid-template-columns: minmax(0, 278fr) minmax(0, 222fr);
  grid-template-rows: 92px 41px 41px 41px;
  gap: 5px 10px;
  align-items: center;
  padding: 0 10px;
}

.flag {
  width: 123px;
  height: 82px;
  justify-self: center;
  margin-top: 8px;
}

.picker {
  display: grid;
  align-items: center;
  margin-top: 8px;
}

.picker select, .picker svg {
  grid-area: 1 / 1;
}

.picker select {
  width: 100%;
  height: 41px;
  padding: 0 10px;
  appearance: none;
  background: #462122;
  border: 2px solid #0a0303;
  box-shadow: inset 0 0 0 2px #833838;
  border-radius: 10px;
  font-size: 19px;
  font-weight: 600;
}

.picker svg {
  width: 16px;
  height: 14px;
  justify-self: end;
  margin-right: 8px;
  pointer-events: none;
}

.key, .val {
  height: 41px;
  line-height: 37px;
  border: 2px solid #050505;
  border-radius: 4px;
  background: #222;
  text-align: center;
  white-space: nowrap;
}

.val {
  background: #181818;
}

.country .val {
  font-size: 17px;
}

.stepper {
  display: flex;
  align-items: center;
  gap: 4px;
}

.stepper .val {
  flex: 1;
  min-width: 0;
  padding: 0;
}

.step {
  flex-shrink: 0;
  width: 32px;
  height: 34px;
  border-radius: 10px;
}

.step svg {
  width: 24px;
  height: 24px;
}

/* stats */
.stats {
  display: grid;
  grid-template-rows: repeat(5, 43px);
  grid-auto-flow: column;
  grid-auto-columns: 1fr;
  gap: 5px;
  padding: 2px;
}

.stat {
  display: grid;
  grid-template-columns: 50px 1fr;
  gap: 2px;
}

.icon {
  width: 50px;
  height: 43px;
  background: #222;
  border: 2px solid #050505;
  border-radius: 4px;
}

.stat .val {
  height: 43px;
  font-size: 19px;
}

.stat .plain {
  padding-right: 6px;
}

.icon .cut {
  stroke: #222;
  stroke-width: 4;
  fill: none;
}

.icon .cut.solid {
  fill: #222;
}

.icon .cut.bar {
  stroke-width: 11;
}

.tyre {
  fill: #222;
  stroke: #fff;
  stroke-width: 6;
}

.disc {
  fill: #222;
  stroke: #fff;
  stroke-width: 5;
}

.icon text {
  font-size: 27px;
  font-weight: 600;
  text-anchor: middle;
}

.icon .coin {
  font-size: 46px;
}

/* modes */
.modes {
  display: flex;
  flex-direction: column;
  align-items: center;
  gap: 4px;
  padding-top: 12px;
}

.mode {
  width: 79%;
  height: 40px;
  border-radius: 12px;
}

.mode.active {
  background: #823636;
  box-shadow: inset 0 0 3px 2px #5c2222;
}

.mode:disabled {
  background: #2d2b2c;
  box-shadow: inset 0 0 0 2px #555354;
  color: #858384;
  cursor: default;
}

/* design steps */
.track {
  display: flex;
  align-items: center;
  height: 50px;
  padding-left: 2px;
  overflow: hidden;
  background: linear-gradient(#181617 2px, #545253 2px 5px, #0a0a0a 5px 45px, #545253 45px 48px, #181617 48px);
}

.stages, .steps {
  position: relative;
  display: flex;
  align-items: center;
}

.stages {
  flex: 541;
  z-index: 2;
}

.steps {
  flex: 1377;
  z-index: 1;
}

.stage {
  --edge: #6d6b6c;
  --fill: #222;
  --tip: 14px;
  position: relative;
  flex: 1;
  display: flex;
  align-items: center;
  justify-content: center;
  height: 48px;
  margin-right: -14px;
  padding: 0 18px 0 0;
  border: 0;
  background: #0c0808;
  clip-path: polygon(0 0, calc(100% - var(--tip)) 0, 100% 50%, calc(100% - var(--tip)) 100%, 0 100%);
  cursor: pointer;
}

.stage::before, .stage::after {
  content: "";
  position: absolute;
  inset: 1px 2px 1px 0;
  background: var(--edge);
  clip-path: polygon(0 0, calc(100% - var(--tip)) 0, 100% 50%, calc(100% - var(--tip)) 100%, 0 100%);
}

.stage::after {
  inset: 3px 4px 3px 0;
  background: var(--fill);
}

.stage svg {
  position: relative;
  z-index: 1;
}

.stage:nth-child(1) { z-index: 12; }
.stage:nth-child(2) { z-index: 11; }
.stage:nth-child(3) { z-index: 10; }
.stage:nth-child(4) { z-index: 9; }
.stage:nth-child(5) { z-index: 8; }
.stage:nth-child(6) { z-index: 7; }
.stage:nth-child(7) { z-index: 6; }
.stage:nth-child(8) { z-index: 5; }
.stage:nth-child(9) { z-index: 4; }
.stage:nth-child(10) { z-index: 3; }
.stage:nth-child(11) { z-index: 2; }
.stage:nth-child(12) { z-index: 1; }

.stage:first-child::after {
  left: 2px;
}

.stage.current {
  --edge: #b5b3b4;
  --fill: #3a3839;
}

.stage.small {
  --edge: #9c4446;
  --fill: #3a1c1c;
  --tip: 12px;
  height: 38px;
  margin-right: -13px;
  padding-right: 18px;
}

.stage.small::after {
  left: 0;
}

.stage.low {
  padding-top: 8px;
}

.stage.picked {
  --edge: #4e1f20;
  --fill: #823636;
}
```
